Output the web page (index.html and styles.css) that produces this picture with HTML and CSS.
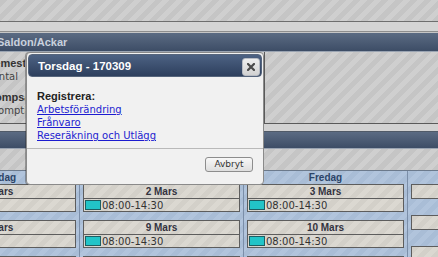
FILE: index.html
```html
<!DOCTYPE html>
<html lang="sv">
<head>
<meta charset="utf-8">
<title>Kalender</title>
<link rel="stylesheet" href="styles.css">
</head>
<body>
<div class="page">
  <div class="stripes top"></div>
  <div class="band"></div>
  <div class="bar"><span class="bar-title">Saldon/Ackar</span></div>
  <div class="panel">
    <div class="panel-box">
      <div class="saldo">
        <div class="lbl-b">Semester</div>
        <div class="lbl-n">Antal</div>
      </div>
      <div class="saldo">
        <div class="lbl-b">Kompsaldo</div>
        <div class="lbl-n">Komptid</div>
      </div>
    </div>
  </div>
  <div class="band2"></div>
  <div class="bar bar2"></div>
  <div class="stripes mid"></div>
  <div class="week">
    <div class="col">
      <div class="dayhead">Onsdag</div>
      <div class="cell"><div class="ch">1 Mars</div><div class="ct"></div></div>
      <div class="cell"><div class="ch">8 Mars</div><div class="ct"></div></div>
      <div class="cell"><div class="ch">15 Mars</div><div class="ct"></div></div>
    </div>
    <div class="col">
      <div class="dayhead">Torsdag</div>
      <div class="cell"><div class="ch">2 Mars</div><div class="ct"><span class="sw"></span>08:00-14:30</div></div>
      <div class="cell"><div class="ch">9 Mars</div><div class="ct"><span class="sw"></span>08:00-14:30</div></div>
      <div class="cell"><div class="ch">16 Mars</div><div class="ct"></div></div>
    </div>
    <div class="col">
      <div class="dayhead">Fredag</div>
      <div class="cell"><div class="ch">3 Mars</div><div class="ct"><span class="sw"></span>08:00-14:30</div></div>
      <div class="cell"><div class="ch">10 Mars</div><div class="ct"><span class="sw"></span>08:00-14:30</div></div>
      <div class="cell"><div class="ch">17 Mars</div><div class="ct"></div></div>
    </div>
    <div class="col">
      <div class="dayhead">Lördag</div>
      <div class="cell short"><div class="ch">4 Mars</div></div>
      <div class="cell short"><div class="ch">11 Mars</div></div>
      <div class="cell short"><div class="ch">18 Mars</div></div>
    </div>
  </div>
</div>

<div class="dialog">
  <div class="dlg-title">
    <span class="dlg-title-text">Torsdag - 170309</span>
    <span class="dlg-close">
      <svg width="8" height="8" viewBox="0 0 8 8"><path d="M1 1 L7 7 M7 1 L1 7" stroke="#4a4a4a" stroke-width="2.2" stroke-linecap="square"/></svg>
    </span>
  </div>
  <div class="dlg-body">
    <div class="reg">Registrera:</div>
    <a class="lnk" href="#">Arbetsförändring</a>
    <a class="lnk" href="#">Frånvaro</a>
    <a class="lnk" href="#">Reseräkning och Utlägg</a>
  </div>
  <div class="dlg-buttons">
    <button class="btn" type="button">Avbryt</button>
  </div>
</div>
</body>
</html>
```
FILE: styles.css
```css
html, body {
  margin: 0;
  padding: 0;
}
body {
  width: 438px;
  height: 257px;
  overflow: hidden;
  position: relative;
  font-family: "DejaVu Sans", sans-serif;
  font-size: 10px;
  background: #c6c6c6;
}
.page {
  width: 438px;
  height: 257px;
  overflow: hidden;
}
.stripes {
  background: repeating-linear-gradient(135deg, #c5c5c5 0 5px, #cfcfcf 5px 10px);
}
.top {
  height: 21px;
}
.band {
  height: 9px;
  border-top: 1px solid #6e6e6e;
  border-bottom: 1px solid #8e8e8e;
  background: #d4d4d4;
}
.bar {
  height: 18px;
  margin-top: 1px;
  background: linear-gradient(#5b6b83, #3d4d66);
  border-bottom: 1px solid #9aa4b2;
  display: flex;
  align-items: center;
}
.bar-title {
  font-family: "Liberation Sans", sans-serif;
  font-weight: bold;
  font-size: 11px;
  color: #c9d1dd;
  margin-left: -3px;
}
.panel {
  height: 71px;
  border-bottom: 1px solid #5a5a5a;
  background: repeating-linear-gradient(135deg, #c5c5c5 0 5px, #cfcfcf 5px 10px);
}
.panel-box {
  width: 265px;
  height: 71px;
  border-right: 1px solid #5a5a5a;
  padding: 5px 0 0 0;
  box-sizing: border-box;
}
.saldo {
  margin-left: -13px;
  margin-bottom: 8px;
  width: 38px;
  overflow: hidden;
  white-space: nowrap;
}
.lbl-b {
  font-family: "Liberation Sans", sans-serif;
  font-weight: bold;
  font-size: 11px;
  color: #333;
  line-height: 13px;
}
.lbl-n {
  color: #444;
  line-height: 13px;
  margin-left: 5px;
}
.band2 {
  height: 7px;
  background: #d2d2d2;
}
.bar2 {
  margin-top: 0;
  border-top: 1px solid #505a68;
  height: 16px;
}
.mid {
  height: 21px;
}
.week {
  display: flex;
  margin-left: -85px;
  border-top: 1px solid #6c7a8c;
  background: repeating-linear-gradient(135deg, #a9bdd6 0 5px, #b1c4dc 5px 10px);
  height: 100px;
}
.col {
  width: 164px;
  flex: none;
  box-sizing: border-box;
  padding: 0 3px;
  border-left: 1px solid #7b8ea8;
  display: flex;
  flex-direction: column;
}
.col:first-child {
  border-left: none;
  padding-left: 4px;
}
.dayhead {
  height: 13px;
  line-height: 13px;
  text-align: center;
  font-family: "Liberation Sans", sans-serif;
  font-weight: bold;
  font-size: 10px;
  color: #2c4468;
}
.cell {
  height: 26px;
  border: 1px solid #5d5d5d;
  background: repeating-linear-gradient(135deg, #d3d0c9 0 5px, #dbd8d1 5px 10px);
  margin-bottom: 8px;
}
.cell.short {
  height: 18px;
  margin-bottom: 16px;
}
.ch {
  height: 13px;
  line-height: 13px;
  border-bottom: 1px solid #5d5d5d;
  text-align: center;
  font-family: "Liberation Sans", sans-serif;
  font-weight: bold;
  font-size: 10px;
  color: #33333f;
}
.short .ch {
  border-bottom: none;
}
.ct {
  height: 12px;
  display: flex;
  align-items: center;
  color: #333;
  font-size: 10px;
  padding-left: 1px;
}
.sw {
  width: 14px;
  height: 8px;
  background: #22c4c8;
  border: 1px solid #1d5e63;
  margin-right: 1px;
}
.dialog {
  position: absolute;
  left: 26px;
  top: 52px;
  width: 236px;
  height: 131px;
  border: 1px solid #8a8a8a;
  border-radius: 4px;
  background: #f1f1f1;
  box-shadow: -1px 0 0 rgba(40, 40, 40, 0.35);
  display: flex;
  flex-direction: column;
}
.dlg-title {
  margin: 1px 1px 0;
  height: 23px;
  flex: none;
  border-radius: 4px;
  background: linear-gradient(#4d6283, #2d3f5d);
  border: 1px solid #56657c;
  box-sizing: border-box;
  display: flex;
  align-items: center;
  justify-content: space-between;
  padding: 0 1px 0 9px;
}
.dlg-title-text {
  font-family: "Liberation Sans", sans-serif;
  font-weight: bold;
  font-size: 11.5px;
  color: #ffffff;
}
.dlg-close {
  width: 16px;
  height: 16px;
  border: 1px solid #b8bcc4;
  border-radius: 3px;
  background: linear-gradient(#eeeeee, #d2d2d2);
  display: flex;
  align-items: center;
  justify-content: center;
  margin-top: 2px;
}
.dlg-body {
  padding: 13px 0 0 10px;
  height: 58px;
  flex: none;
}
.reg {
  font-family: "Liberation Sans", sans-serif;
  font-weight: bold;
  font-size: 11px;
  color: #222;
  line-height: 13px;
}
.lnk {
  display: block;
  width: max-content;
  color: #1c1cd0;
  text-decoration: underline;
  line-height: 13px;
}
.dlg-buttons {
  border-top: 1px solid #b9b9b9;
  display: flex;
  justify-content: flex-end;
  padding: 8px 10px 0 0;
}
.btn {
  width: 48px;
  height: 15px;
  padding: 0;
  border: 1px solid #8d8d8d;
  border-radius: 3px;
  background: linear-gradient(#f8f8f8, #dedede);
  font-family: "DejaVu Sans", sans-serif;
  font-size: 9px;
  color: #333;
  line-height: 13px;
}
```
